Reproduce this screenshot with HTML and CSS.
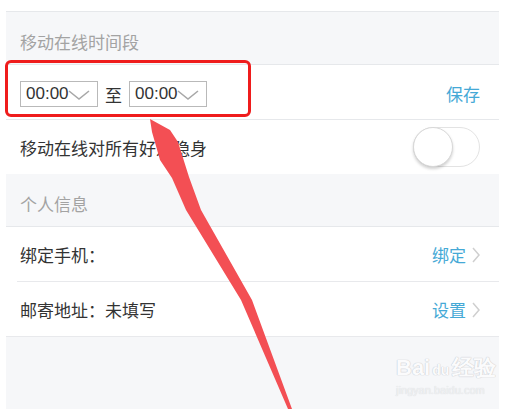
FILE: index.html
```html
<!DOCTYPE html>
<html lang="zh">
<head>
<meta charset="utf-8">
<link rel="stylesheet" href="styles.css">
</head>
<body>
<div class="screen">
  <div class="top-gap"></div>
  <div class="section-head">移动在线时间段</div>
  <div class="row row-time">
    <div class="time-group">
      <div class="select"><span>00:00</span><svg class="caret" viewBox="0 0 22 12" width="22" height="12"><path d="M1 2 L11 10 L21 2" fill="none" stroke="#a8a8a8" stroke-width="1.6"/></svg></div>
      <span class="to">至</span>
      <div class="select"><span>00:00</span><svg class="caret" viewBox="0 0 22 12" width="22" height="12"><path d="M1 2 L11 10 L21 2" fill="none" stroke="#a8a8a8" stroke-width="1.6"/></svg></div>
    </div>
    <span class="link">保存</span>
  </div>
  <div class="row row-switch">
    <span class="label">移动在线对所有好友隐身</span>
    <div class="toggle"><div class="knob"></div></div>
  </div>
  <div class="section-head">个人信息</div>
  <div class="row row-item">
    <span class="label">绑定手机：</span>
    <span class="action"><span class="link">绑定</span><svg class="chev" viewBox="0 0 10 16" width="10" height="16"><path d="M2 1 L8 8 L2 15" fill="none" stroke="#cfcfcf" stroke-width="1.5"/></svg></span>
  </div>
  <div class="row row-item last">
    <span class="label">邮寄地址：未填写</span>
    <span class="action"><span class="link">设置</span><svg class="chev" viewBox="0 0 10 16" width="10" height="16"><path d="M2 1 L8 8 L2 15" fill="none" stroke="#cfcfcf" stroke-width="1.5"/></svg></span>
  </div>
  <div class="bottom"></div>

  <div class="highlight"></div>
  <div class="watermark">
    <div class="wm-main">Bai<span class="paw">du</span>经验</div>
    <div class="wm-sub">jingyan.baidu.com</div>
  </div>
</div>
<svg class="arrow" width="515" height="409" viewBox="0 0 515 409">
  <polygon points="150,119 170,130 178,142 189,177 201,210 252,300 292,409 288,409 241,300 186,210 172,178 160,160 152,132" fill="#f34f54"/>
</svg>
</body>
</html>
```

FILE: styles.css
```css
html, body {
  margin: 0;
  padding: 0;
  background: #ffffff;
  width: 515px;
  height: 409px;
  overflow: hidden;
  font-family: "Noto Sans CJK SC", "Noto Sans", sans-serif;
}

.screen {
  position: relative;
  width: 493px;
  margin-left: 6px;
  height: 409px;
  display: flex;
  flex-direction: column;
  background: #f6f7f9;
}

.top-gap {
  height: 11px;
  background: #ffffff;
  border-bottom: 1px solid #e6e8eb;
}

.section-head {
  height: 53px;
  flex: none;
  box-sizing: border-box;
  display: flex;
  align-items: center;
  padding: 6px 0 0 14px;
  font-size: 17px;
  color: #a3a3a3;
  background: #f6f7f9;
  border-bottom: 1px solid #e6e8eb;
}

.row {
  flex: none;
  background: #ffffff;
  display: flex;
  align-items: center;
  justify-content: space-between;
  padding: 0 19px 0 14px;
  font-size: 17px;
  color: #333333;
}

.row-time {
  height: 54px;
  border-bottom: 1px solid #e6e8eb;
}

.row-switch {
  height: 54px;
  padding-right: 19px;
}

.row-item {
  height: 55px;
  padding-right: 18px;
  position: relative;
}

.row-item::after {
  content: "";
  position: absolute;
  left: 11px;
  right: 0;
  bottom: 0;
  height: 1px;
  background: #e8e9ec;
}

.row-item.last::after {
  left: 0;
}

.time-group {
  display: flex;
  align-items: center;
  gap: 7px;
  margin-top: 4px;
}

.select {
  width: 71px;
  height: 24px;
  border: 1px solid #b9b9b9;
  display: flex;
  align-items: center;
  padding-left: 5px;
  box-sizing: content-box;
  font-family: "Liberation Sans", Arial, sans-serif;
  font-size: 17px;
  color: #333;
}

.caret {
  margin-left: -1px;
  margin-top: 1px;
}

.to {
  font-size: 17px;
  color: #333;
}

.link {
  color: #45a9d6;
  font-size: 17px;
}

.row-time .link {
  margin-top: 2px;
}

.action {
  display: flex;
  align-items: center;
  gap: 5px;
}

.toggle {
  width: 65px;
  height: 38px;
  border: 1px solid #e3e3e3;
  border-radius: 20px;
  background: #ffffff;
  position: relative;
}

.knob {
  position: absolute;
  left: -1px;
  top: -1px;
  width: 38px;
  height: 38px;
  border-radius: 50%;
  background: #ffffff;
  border: 1px solid #d8d8d8;
  box-shadow: 0 2px 3px rgba(0, 0, 0, 0.18);
}

.bottom {
  flex: 1;
  background: #f6f7f9;
}

.highlight {
  position: absolute;
  left: -1px;
  top: 60px;
  width: 240px;
  height: 51px;
  border: 3px solid #ef1c1c;
  border-radius: 6px;
}

.watermark {
  position: absolute;
  left: 390px;
  top: 356px;
}

.wm-main {
  font-family: "Liberation Sans", sans-serif;
  font-size: 22px;
  font-weight: bold;
  color: #fbfbfc;
  text-shadow: 0 0 1px #c6c8cd, 0 0 1px #c6c8cd;
  line-height: 24px;
}

.paw {
  font-size: 14px;
  margin: 0 3px 0 2px;
}

.wm-sub {
  font-family: "Liberation Sans", sans-serif;
  font-size: 11px;
  color: #f0f1f3;
  text-shadow: 0 0 1px #cfd1d5;
  margin-top: 2px;
}

.arrow {
  position: absolute;
  left: 0;
  top: 0;
  pointer-events: none;
}
```
